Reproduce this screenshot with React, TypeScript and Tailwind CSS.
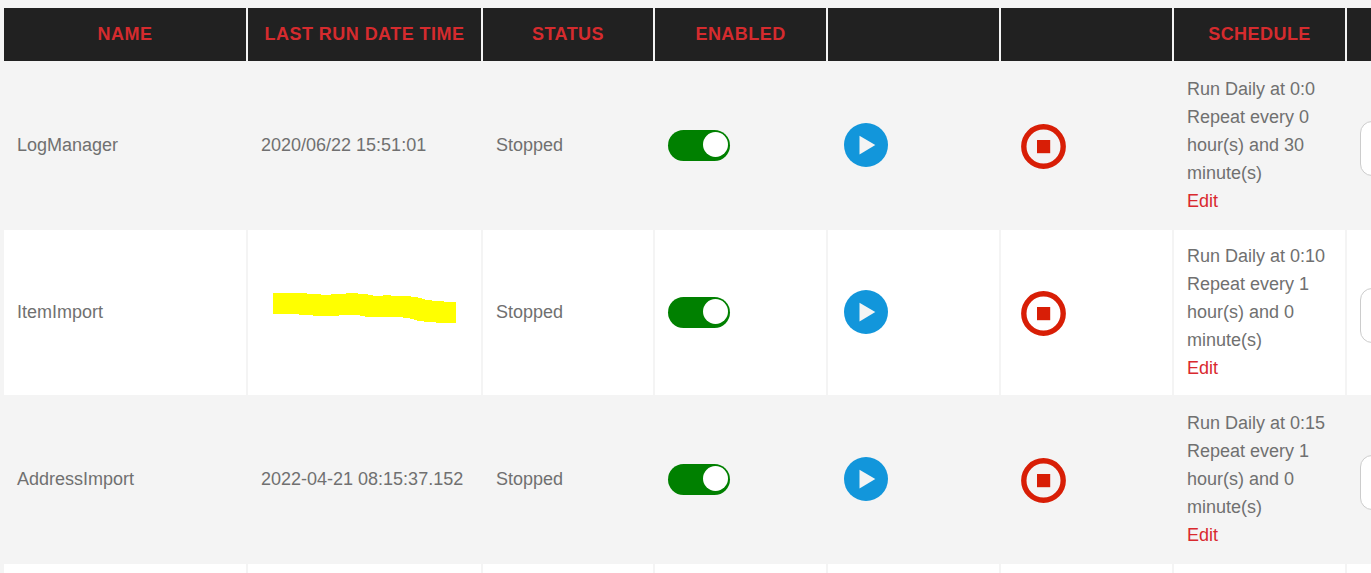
import React, { useState } from "react";
import clsx from "clsx";

type Task = {
  name: string;
  lastRun: string | null;
  status: string;
  startTime: string;
  hours: number;
  minutes: number;
};

const tasks: Task[] = [
  {
    name: "LogManager",
    lastRun: "2020/06/22 15:51:01",
    status: "Stopped",
    startTime: "0:0",
    hours: 0,
    minutes: 30,
  },
  {
    name: "ItemImport",
    lastRun: null,
    status: "Stopped",
    startTime: "0:10",
    hours: 1,
    minutes: 0,
  },
  {
    name: "AddressImport",
    lastRun: "2022-04-21 08:15:37.152",
    status: "Stopped",
    startTime: "0:15",
    hours: 1,
    minutes: 0,
  },
];

const columns = [
  { key: "name", label: "Name", className: "w-[242px]" },
  { key: "lastRun", label: "Last Run Date Time", className: "w-[233px]" },
  { key: "status", label: "Status", className: "w-[170px]" },
  { key: "enabled", label: "Enabled", className: "w-[171px]" },
  { key: "start", label: "", className: "w-[171px]" },
  { key: "stop", label: "", className: "w-[171px]" },
  { key: "schedule", label: "Schedule", className: "w-[171px]" },
  { key: "notes", label: "", className: "" },
];

const PlayIcon = () => (
  <svg viewBox="0 0 44 44" className="block size-11">
    <circle cx="22" cy="22" r="22" fill="#1296db" />
    <path d="M15.5 12.7v18.8L31.3 22z" fill="#f4f4f4" />
  </svg>
);

const StopIcon = () => (
  <svg viewBox="0 0 45 45" className="block size-[45px]">
    <circle
      cx="22.5"
      cy="22.5"
      r="19.7"
      fill="none"
      stroke="#d81e06"
      strokeWidth="5.4"
    />
    <rect x="16" y="16" width="13.2" height="13.2" fill="#d81e06" />
  </svg>
);

const Marker = () => (
  <svg
    viewBox="0 0 183 30"
    className="mb-2 ml-3 block h-[30px] w-[183px]"
    shapeRendering="crispEdges"
    aria-hidden="true"
  >
    <path
      d="M0 0H34V1H48V2H58V1H73V0H85V1H95V2H100V3H110V2H118V3H138V4H145V5H149V6H152V7H159V8H171V9H183V30H163V29H151V28H144V27H141V26H137V25H130V24H92V23H87V22H66V23H40V22H26V21H0Z"
      fill="#ffff00"
    />
  </svg>
);

const Toggle = ({ label }: { label: string }) => {
  const [enabled, setEnabled] = useState(true);
  return (
    <button
      type="button"
      role="switch"
      aria-checked={enabled}
      aria-label={label}
      onClick={() => setEnabled(!enabled)}
      className={clsx(
        "flex h-[31px] w-[62px] items-start rounded-full px-0.5 pt-0.5",
        enabled ? "justify-end bg-[#008000]" : "justify-start bg-[#cccccc]",
      )}
    >
      <span className="size-[25px] rounded-full bg-white" />
    </button>
  );
};

const TaskRow = ({ task }: { task: Task }) => (
  <tr className="even:bg-white *:px-[13px] *:pt-3 *:pb-[13px]">
    <td>{task.name}</td>
    <td className="whitespace-nowrap">{task.lastRun ?? <Marker />}</td>
    <td>{task.status}</td>
    <td>
      <Toggle label={`Enable ${task.name}`} />
    </td>
    <td>
      <button
        type="button"
        aria-label={`Start ${task.name}`}
        className="ml-[3px] block"
      >
        <PlayIcon />
      </button>
    </td>
    <td>
      <button
        type="button"
        aria-label={`Stop ${task.name}`}
        className="mt-0.5 ml-[7px] block"
      >
        <StopIcon />
      </button>
    </td>
    <td>
      Run Daily at {task.startTime}
      <br />
      Repeat every {task.hours} hour(s) and {task.minutes} minute(s)
      <br />
      <a href="#edit" className="text-[#d9292e]">
        Edit
      </a>
    </td>
    <td>
      <input
        type="text"
        aria-label={`${task.name} notes`}
        className="mt-1.5 block h-[55px] w-full rounded-xl border border-[#cccccc] bg-white px-3"
      />
    </td>
  </tr>
);

export default function App() {
  return (
    <main className="h-screen overflow-hidden bg-[#f4f4f4] px-0.5 pt-1.5 font-['Liberation_Sans',Arial,sans-serif] text-[18px] leading-7 text-[#707070]">
      <table className="w-[111%] table-fixed border-separate border-spacing-0.5">
        <thead>
          <tr>
            {columns.map(({ key, label, className }) => (
              <th
                key={key}
                className={clsx(
                  "bg-[#212121] px-[13px] pt-3 pb-[13px] text-center font-bold tracking-wide whitespace-nowrap text-[#d52b2e] uppercase",
                  className,
                )}
              >
                {label}
              </th>
            ))}
          </tr>
        </thead>
        <tbody>
          {tasks.map((task) => (
            <TaskRow key={task.name} task={task} />
          ))}
          <tr className="h-[165px] even:bg-white">
            {columns.map(({ key }) => (
              <td key={key} />
            ))}
          </tr>
        </tbody>
      </table>
    </main>
  );
}
